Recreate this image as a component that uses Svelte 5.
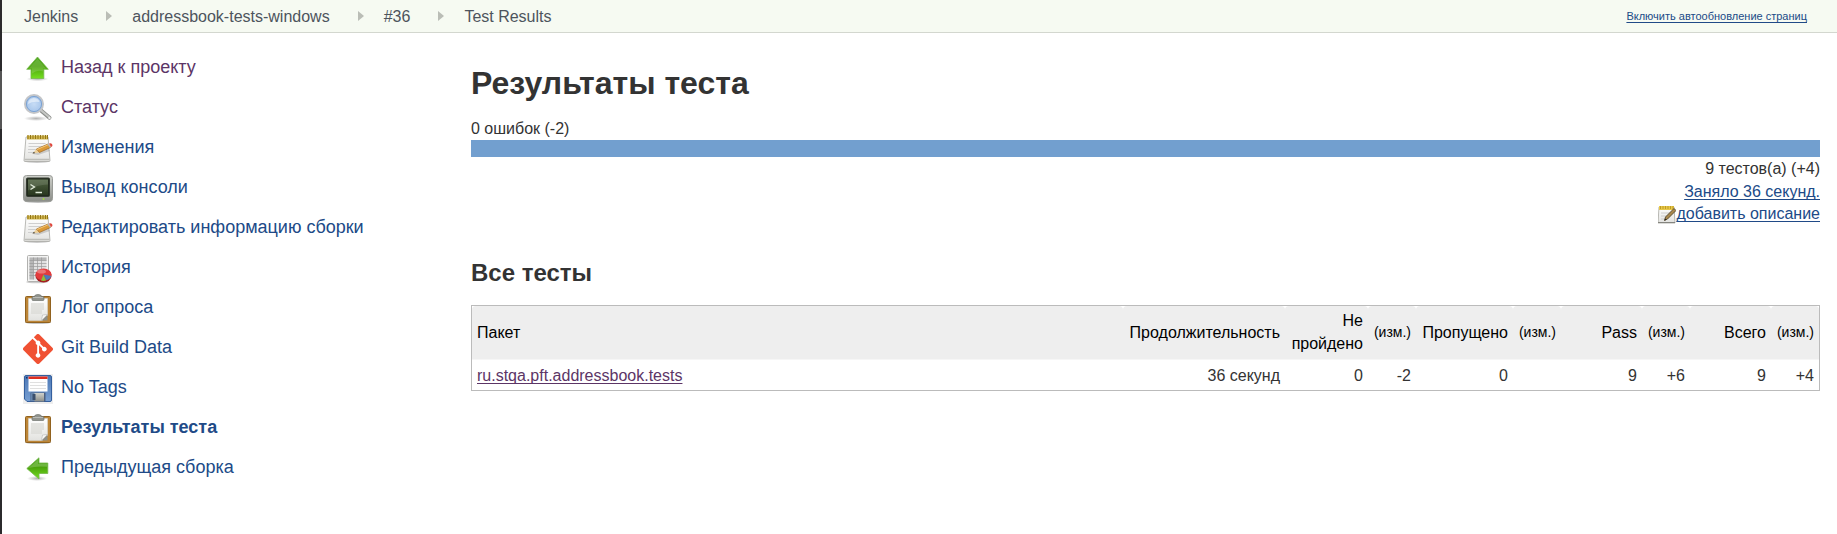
<script>
  const crumbs = ['Jenkins', 'addressbook-tests-windows', '#36', 'Test Results'];

  const tasks = [
    { icon: 'up', label: 'Назад к проекту', visited: true },
    { icon: 'search', label: 'Статус', visited: true },
    { icon: 'notepad', label: 'Изменения' },
    { icon: 'terminal', label: 'Вывод консоли' },
    { icon: 'notepad', label: 'Редактировать информацию сборки' },
    { icon: 'graph', label: 'История' },
    { icon: 'clipboard', label: 'Лог опроса' },
    { icon: 'git', label: 'Git Build Data' },
    { icon: 'save', label: 'No Tags' },
    { icon: 'clipboard', label: 'Результаты теста', current: true },
    { icon: 'previous', label: 'Предыдущая сборка' }
  ];

  const columns = [
    { label: 'Пакет', kind: 'name' },
    { label: 'Продолжительность', kind: 'duration' },
    { label: 'Не пройдено', kind: 'failed' },
    { label: '(изм.)', kind: 'diff' },
    { label: 'Пропущено', kind: 'skipped' },
    { label: '(изм.)', kind: 'diff' },
    { label: 'Pass', kind: 'count' },
    { label: '(изм.)', kind: 'diff' },
    { label: 'Всего', kind: 'count' },
    { label: '(изм.)', kind: 'diff' }
  ];

  const rows = [
    { name: 'ru.stqa.pft.addressbook.tests', cells: ['36 секунд', '0', '-2', '0', '', '9', '+6', '9', '+4'] }
  ];
</script>

{#snippet notepad()}
  <ellipse cx="14" cy="27.500" rx="12" ry="1.500" fill="#000" opacity=".2" />
  <path d="M3 3h22l2 23.500q0 1-1 1H2q-1 0-1-1z" fill="url(#paper)" stroke="#aaa9a5" stroke-width=".8" />
  <path d="M1.500 25.500h25" stroke="#bdbdb8" stroke-width="1.500" />
  <path d="M4 1.500h21v4H4z" fill="#d3b851" />
  <path d="M5 1v4M7.500 1v4M10 1v4M12.500 1v4M15 1v4M17.500 1v4M20 1v4M22.500 1v4M24.500 1v4" stroke="#937717" stroke-width="1" />
  <path d="M5.500 9.500h17M5.500 12.500h15M5 15.500h10M5 18.500h6" stroke="#cfcfcf" stroke-width="1" />
  <path d="M10 20l15-6 2 3-12 4z" fill="#000" opacity=".15" />
  <path d="M9.500 19.500l4-4.500 3 3.500z" fill="#ecd09b" />
  <path d="M9.500 19.500l1.500-1.700 1 1.400z" fill="#333" />
  <path d="M13.500 15l11.500-5 2.500 3.500-11 5z" fill="#dc9a37" stroke="#9c641c" stroke-width=".7" />
  <path d="M14 15.500l11-4.700" stroke="#f4c878" stroke-width="1" />
  <path d="M24.500 10.200l1.500-.7 2.400 3.500-1.500.8z" fill="#b9bdb9" />
  <path d="M26 9.500q2-.7 3 .5t0 2.500l-1 .6z" fill="#e0483e" />
{/snippet}

{#snippet picture(name)}
  <svg class="icon" viewBox="0 0 30 30" aria-hidden="true">
    {#if name === 'up'}
      <ellipse cx="14.500" cy="25" rx="11" ry="2.200" fill="url(#shadow)" />
      <path d="M14.500 3L25.300 15.300h-4.500v9.200H8v-9.200H3.700z" fill="url(#green)" stroke="#75b84b" stroke-width=".8" />
      <path d="M14.500 4.500L23 14.500h-3v3q-6-2-11 2v-5H5.800z" fill="#fff" opacity=".15" />
    {:else if name === 'previous'}
      <ellipse cx="14" cy="24.500" rx="10" ry="2.500" fill="url(#shadow)" />
      <path d="M3.800 14.500L16 3.800v5.200h8.800v10.500H16v5.500z" fill="url(#green)" stroke="#75b84b" stroke-width=".8" />
      <path d="M5.500 14L15 5.700v4.100h9v3q-10-1-18.500 1.200z" fill="#fff" opacity=".2" />
    {:else if name === 'search'}
      <ellipse cx="13" cy="24.500" rx="12" ry="2.500" fill="url(#shadow)" />
      <path d="M18 16.500l8.500 7.300" stroke="#8d8f8c" stroke-width="4" stroke-linecap="round" />
      <path d="M18 16.200l8 6.900" stroke="#c6c8c5" stroke-width="2" stroke-linecap="round" />
      <circle cx="26.500" cy="24" r="1.200" fill="#eee" />
      <circle cx="11" cy="10" r="9" fill="url(#glass)" stroke="#c3c5c8" stroke-width="2" />
      <circle cx="11" cy="10" r="7.600" fill="none" stroke="#7da3d2" stroke-width="1" />
      <path d="M5 10q0-5 5.500-6 5 0 6 4-7-1-11.500 2z" fill="#fff" opacity=".5" />
    {:else if name === 'notepad'}
      {@render notepad()}
    {:else if name === 'terminal'}
      <ellipse cx="15" cy="27.500" rx="13" ry="1.500" fill="#000" opacity=".25" />
      <rect x=".5" y="1.500" width="29" height="26" rx="3" fill="url(#metal)" stroke="#999b97" />
      <rect x="3.500" y="4" width="23" height="18.500" rx="1" fill="#20291b" stroke="#353c31" />
      <rect x="5" y="5.500" width="20" height="15.500" fill="url(#screen)" />
      <path d="M5 5.500h20v5q-11 0-20 6z" fill="#fff" opacity=".12" />
      <path d="M7.500 10.500l4 2.500-4 2.500M12.500 18.500h6.500" fill="none" stroke="#e3eddc" stroke-width="1.300" />
      <circle cx="20.500" cy="25" r="1" fill="#9fdc3a" />
    {:else if name === 'graph'}
      <ellipse cx="14" cy="28" rx="11" ry="1.300" fill="#000" opacity=".2" />
      <rect x="4.500" y="1.500" width="21" height="26" rx="1" fill="#f4f4f3" stroke="#b1b1af" />
      <path d="M6.500 3.500h17v22h-17z" fill="#e1e1e1" />
      <path d="M6.500 3.500h17v3h-17zM6.500 3.500h4v22h-4z" fill="#b7b7b7" />
      <path d="M6.500 6.500h17M6.500 9.500h17M6.500 12.500h17M6.500 15.500h17M6.500 18.500h17M6.500 21.500h17M10.500 3.500v22M14.500 3.500v22M18.500 3.500v22" stroke="#999" stroke-width=".7" />
      <ellipse cx="20.500" cy="22" rx="8" ry="6.500" fill="#a51e20" />
      <ellipse cx="20.500" cy="20.500" rx="8" ry="6" fill="#e33b3c" />
      <path d="M20.500 20.500l-2.500 6q2.500.8 5 0z" fill="#8ac23a" />
      <path d="M20.500 20.500l3 5.800q4-1.300 4.800-4.200z" fill="#4d79b8" />
      <ellipse cx="18.500" cy="17.500" rx="4.500" ry="2" fill="#fff" opacity=".3" />
    {:else if name === 'clipboard'}
      <ellipse cx="15" cy="28.500" rx="13" ry="1.300" fill="#000" opacity=".3" />
      <rect x="2.500" y="2.500" width="25" height="26" rx="1" fill="#bd8637" stroke="#91621f" />
      <path d="M5.500 4.500h19v17l-5 5h-14z" fill="url(#paper)" stroke="#d9d9d3" stroke-width=".6" />
      <path d="M24.500 20.500v6h-6z" fill="#8f8f88" />
      <path d="M18.500 26.500l1-5.500 5-.5z" fill="#f8f8f6" stroke="#aaa" stroke-width=".5" />
      <path d="M8 9h13v3H8zM8 12h13v4H8zM8 16h11v4H8z" fill="#d8d8d4" opacity=".65" />
      <path d="M9 3.500q0-1 1-1h1.500q0-2 3.500-2t3.500 2H20q1 0 1 1v2q0 1-1 1H10q-1 0-1-1z" fill="#92958f" stroke="#70736e" stroke-width=".7" />
      <path d="M10 3.500h10" stroke="#c3c5c1" stroke-width=".8" />
    {:else if name === 'git'}
      <path transform="scale(.326)" fill="#f05133" d="M90.156 41.965 50.036 1.848a5.918 5.918 0 0 0-8.372 0l-8.328 8.332 10.566 10.566a7.03 7.03 0 0 1 7.230 1.684 7.034 7.034 0 0 1 1.669 7.277l10.187 10.184a7.028 7.028 0 0 1 7.278 1.672 7.040 7.040 0 0 1 0 9.957 7.050 7.050 0 0 1-9.965 0 7.044 7.044 0 0 1-1.528-7.660l-9.500-9.497V59.360a7.040 7.040 0 0 1 1.860 11.290 7.040 7.040 0 0 1-9.957 0 7.040 7.040 0 0 1 0-9.958 7.060 7.060 0 0 1 2.304-1.539V33.926a7.049 7.049 0 0 1-3.820-9.234L29.242 14.272 1.730 41.777a5.918 5.918 0 0 0 0 8.371L41.852 90.270a5.919 5.919 0 0 0 8.370 0l39.934-39.934a5.925 5.925 0 0 0 0-8.371" />
    {:else if name === 'save'}
      <path d="M0 0h30v30H0z" fill="#eee" />
      <path d="M3 1.500h24q1.500 0 1.500 1.500v23q0 1.500-1.500 1.500H4L1.500 25V3q0-1.500 1.500-1.500z" fill="url(#floppy)" stroke="#345f9e" />
      <path d="M5.500 2.500h19v15h-19z" fill="#fff" />
      <path d="M5.500 2.500h19V5h-19z" fill="#df2e20" />
      <path d="M7 8.500h16M7 11.500h16M7 14.500h16" stroke="#d8d8d8" stroke-width=".8" />
      <path d="M7.500 18.500h15v9h-15z" fill="#4d6080" />
      <path d="M8 19h4v8H8z" fill="#6686ad" />
      <path d="M11.500 19h9.500v8.500h-9.500z" fill="url(#metal)" />
      <path d="M9.500 20h3v6h-3z" fill="#3b4f6c" />
      <path d="M3 3h1.500v1.500H3z" fill="#173766" />
    {/if}
  </svg>
{/snippet}

<svg class="defs" aria-hidden="true">
  <defs>
    <linearGradient id="green" x1="0" y1="0" x2="0" y2="1"><stop offset="0" stop-color="#4aa51b" /><stop offset=".45" stop-color="#4ba30c" /><stop offset="1" stop-color="#75df20" /></linearGradient>
    <linearGradient id="paper" x1="0" y1="0" x2="0" y2="1"><stop offset="0" stop-color="#fff" /><stop offset="1" stop-color="#e2e2df" /></linearGradient>
    <linearGradient id="metal" x1="0" y1="0" x2="0" y2="1"><stop offset="0" stop-color="#d0d2cc" /><stop offset="1" stop-color="#8b8d88" /></linearGradient>
    <linearGradient id="screen" x1="0" y1="0" x2="0" y2="1"><stop offset="0" stop-color="#506341" /><stop offset="1" stop-color="#29371f" /></linearGradient>
    <linearGradient id="floppy" x1="0" y1="0" x2="0" y2="1"><stop offset="0" stop-color="#4c78b6" /><stop offset="1" stop-color="#779fd2" /></linearGradient>
    <radialGradient id="glass"><stop offset="0" stop-color="#c7dcf5" /><stop offset="1" stop-color="#a3c3ea" /></radialGradient>
    <radialGradient id="shadow"><stop offset="0" stop-color="#000" stop-opacity=".3" /><stop offset="1" stop-color="#000" stop-opacity="0" /></radialGradient>
  </defs>
</svg>

<div class="page">
  <header>
    <nav aria-label="Breadcrumb">
      <ol class="crumbs">
        {#each crumbs as crumb, i}
          <li>
            {#if i > 0}
              <svg class="chevron" viewBox="0 0 6 10" aria-hidden="true"><path d="M0 0L6 5L0 10Z" fill="#babdb6" /></svg>
            {/if}
            <a href="#top">{crumb}</a>
          </li>
        {/each}
      </ol>
    </nav>
    <a class="refresh" href="#refresh">Включить автообновление страниц</a>
  </header>

  <div class="body">
    <nav class="tasks" aria-label="Tasks">
      {#each tasks as task}
        <a href="#task" class:visited={task.visited} class:current={task.current}>
          {@render picture(task.icon)}
          <span>{task.label}</span>
        </a>
      {/each}
    </nav>

    <main>
      <h1>Результаты теста</h1>
      <div class="failures">0 ошибок (-2)</div>
      <div class="bar"></div>
      <div class="summary">
        <div>9 тестов(а) (+4)</div>
        <a href="#history">Заняло 36 секунд.</a>
        <div class="describe">
          <svg class="small" viewBox="0 0 18 19" aria-hidden="true">
            <path d="M1 2h15l1 16H0z" fill="url(#paper)" stroke="#a6a6a0" stroke-width=".8" />
            <path d="M0 17.500h17" stroke="#85857f" />
            <path d="M1 1h15v4H1z" fill="#e8c84a" />
            <path d="M2.500 1v3M5 1v3M7.500 1v3M10 1v3M12.500 1v3M15 1v3" stroke="#b38f1d" stroke-width=".8" />
            <path d="M3 8h9M3 11h6M3 14h4" stroke="#ccc" />
            <path d="M6.500 15.500l1-3.500L16 3.500l2 2L9.500 14z" fill="#a9884d" stroke="#54452a" stroke-width=".9" />
            <path d="M6.500 15.500l.6-2 1.400 1.200z" fill="#222" />
          </svg>
          <a href="#describe">добавить описание</a>
        </div>
      </div>

      <h2>Все тесты</h2>
      <table>
        <thead>
          <tr>
            {#each columns as column}
              <th scope="col" class={column.kind}>{column.label}</th>
            {/each}
          </tr>
        </thead>
        <tbody>
          {#each rows as row}
            <tr>
              <td class="name"><a href="#package">{row.name}</a></td>
              {#each row.cells as cell}
                <td>{cell}</td>
              {/each}
            </tr>
          {/each}
        </tbody>
      </table>
    </main>
  </div>
</div>

<style>
  :global(body) {
    background: #fff;
  }

  .page {
    box-sizing: border-box;
    min-height: 100vh;
    border-left: 2px solid;
    border-image: linear-gradient(#2b2a2c 72px, #555 72px, #555 130px, #2b2a2c 130px) 1;
    font: 16px/23px "Liberation Sans", Arial, sans-serif;
    color: #333;
  }

  .defs {
    position: absolute;
    width: 0;
    height: 0;
  }

  a {
    color: #204a87;
    text-decoration-skip-ink: none;
    text-underline-offset: 2px;
  }

  header {
    display: flex;
    align-items: center;
    justify-content: space-between;
    height: 32px;
    padding: 0 30px 0 22px;
    border-bottom: 1px solid #d3d7cf;
    background: #f6faf2;
  }

  .crumbs {
    display: flex;
    margin: 0;
    padding: 0;
    list-style: none;
  }

  .crumbs li {
    display: flex;
    align-items: center;
  }

  .crumbs a {
    color: #4d545d;
    text-decoration: none;
  }

  .chevron {
    width: 6px;
    height: 10px;
    margin: 0 20px 0 28px;
  }

  .refresh {
    font-size: 11px;
  }

  .body {
    display: flex;
  }

  .tasks {
    flex: none;
    box-sizing: border-box;
    width: 449px;
    padding: 16px 0 0 21px;
    font-size: 18px;
  }

  .tasks a {
    display: flex;
    gap: 8px;
    height: 30px;
    padding: 5px 0;
    line-height: 26px;
    text-decoration: none;
  }

  .icon {
    width: 30px;
    height: 30px;
  }

  .tasks a.visited,
  td a {
    color: #5c3566;
  }

  .tasks a.current {
    font-weight: bold;
  }

  main {
    flex: 1;
    padding: 30px 17px 0 20px;
  }

  h1 {
    margin: 0 0 15px;
    font-size: 32px;
    line-height: 40px;
  }

  .failures {
    line-height: 22px;
  }

  .bar {
    height: 17px;
    background: #729fcf;
  }

  .summary {
    text-align: right;
  }

  .describe {
    display: flex;
    align-items: center;
    justify-content: flex-end;
    line-height: 22px;
  }

  .small {
    width: 18px;
    height: 19px;
  }

  h2 {
    margin: 34px 0 18px;
    font-size: 24px;
    line-height: 28px;
  }

  table {
    width: 100%;
    border: 1px solid #bbb;
    border-spacing: 0;
  }

  th {
    box-sizing: border-box;
    height: 54px;
    padding: 3px 5px 4px;
    border-bottom: 1px solid #f6f6f6;
    border-radius: 4px 4px 0 0;
    background: #eee;
    color: #000;
    font-weight: normal;
    text-align: right;
  }

  td {
    padding: 4px 5px 3px;
    text-align: right;
  }

  .name {
    text-align: left;
  }

  .duration {
    width: 162px;
  }

  .failed {
    width: 83px;
  }

  .count {
    width: 81px;
  }

  .skipped {
    width: 97px;
  }

  .diff {
    width: 48px;
    font-size: 14px;
  }
</style>
